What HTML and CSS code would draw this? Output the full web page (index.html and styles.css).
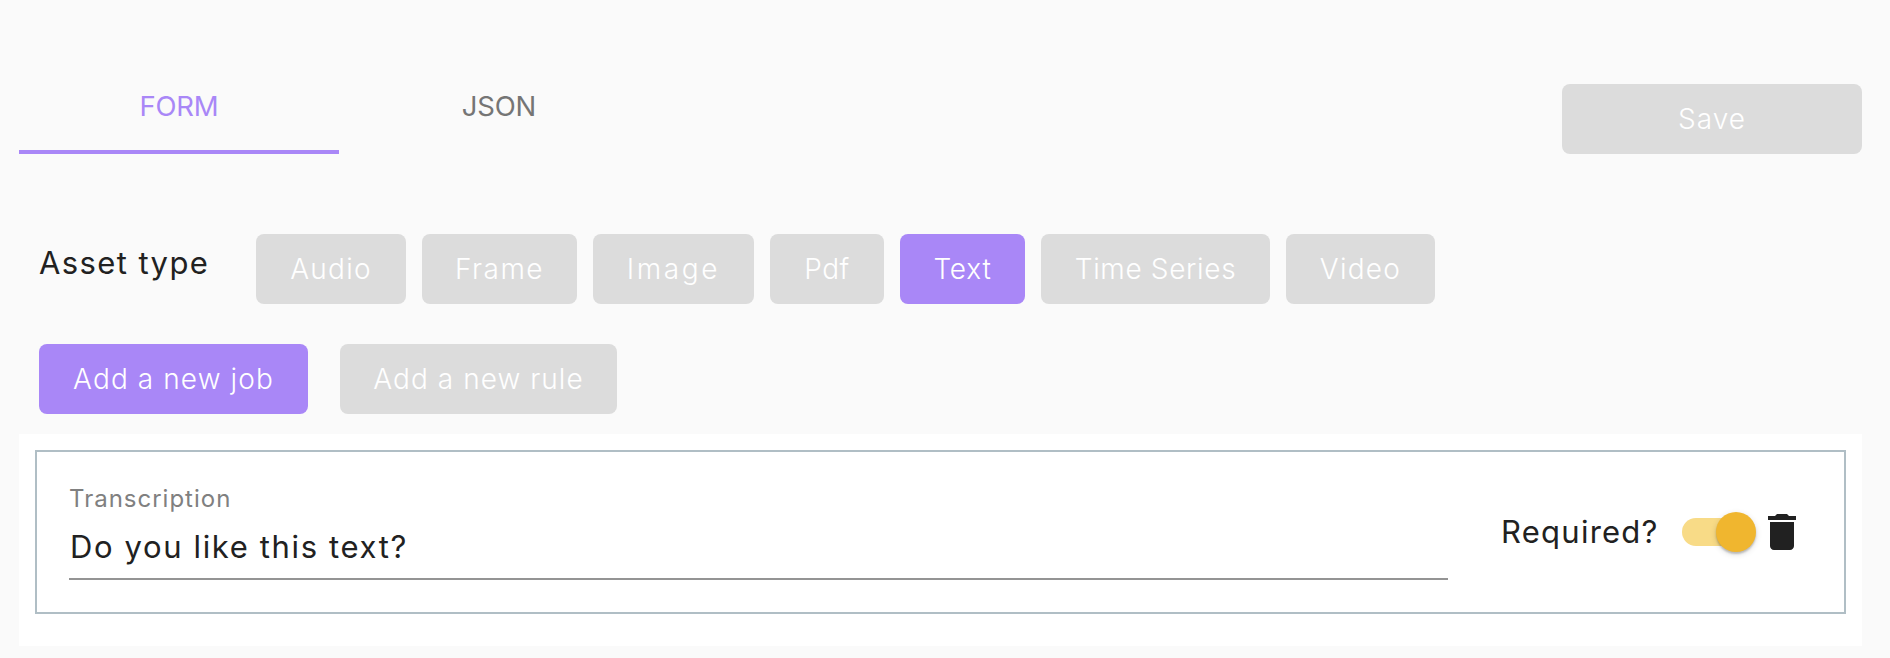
FILE: index.html
```html
<!DOCTYPE html>
<html lang="en">
<head>
<meta charset="utf-8">
<title>Job settings</title>
<link rel="stylesheet" href="styles.css">
</head>
<body>
<main class="page">
  <header class="topbar">
    <nav class="tabs">
      <a class="tab tab-active">FORM</a>
      <a class="tab">JSON</a>
    </nav>
    <button class="btn save">Save</button>
  </header>
  <section class="assets">
    <span class="asset-label">Asset type</span>
    <div class="asset-list">
      <button class="btn w-audio">Audio</button>
      <button class="btn w-frame">Frame</button>
      <button class="btn w-image">Image</button>
      <button class="btn w-pdf">Pdf</button>
      <button class="btn btn-primary w-text">Text</button>
      <button class="btn w-time">Time Series</button>
      <button class="btn w-video">Video</button>
    </div>
  </section>
  <section class="actions">
    <button class="btn btn-primary w-job">Add a new job</button>
    <button class="btn w-rule">Add a new rule</button>
  </section>
  <section class="card">
    <div class="job">
      <div class="field">
        <label class="field-label">Transcription</label>
        <div class="field-value">Do you like this text?</div>
      </div>
      <div class="required">
        <span class="required-label">Required?</span>
        <span class="switch"><span class="thumb"></span></span>
        <svg class="trash" viewBox="0 0 24 24"><path d="M6 19c0 1.1.9 2 2 2h8c1.1 0 2-.9 2-2V7H6v12zM19 4h-3.5l-1-1h-5l-1 1H5v2h14V4z"/></svg>
      </div>
    </div>
  </section>
</main>
</body>
</html>
```
FILE: styles.css
```css
* { box-sizing: border-box; }
body {
  margin: 0;
  background: #fafafa;
  color: #212121;
  font-family: Inter, "Liberation Sans", sans-serif;
  font-weight: 400;
}
.page { height: 658px; padding: 84px 28px 0 19px; overflow: hidden; }
.topbar { display: flex; justify-content: space-between; height: 70px; }
.tabs { display: flex; }
.tab {
  width: 320px;
  height: 70px;
  padding-top: 5px;
  text-align: center;
  font-size: 27.5px;
  line-height: 34px;
  letter-spacing: -.2px;
  color: #757575;
}
.tab-active { color: #a987f7; border-bottom: 4px solid #a987f7; }
.btn {
  height: 70px;
  flex: none;
  padding: 0;
  border: 0;
  border-radius: 8px;
  background: #dcdcdc;
  color: #fff;
  font: inherit;
  font-size: 28px;
  font-weight: 300;
  line-height: 34px;
  letter-spacing: 1.25px;
  white-space: nowrap;
}
.btn-primary { background: #a987f7; }
.save { width: 300px; letter-spacing: 1px; }
.assets { display: flex; margin-top: 80px; padding-left: 20px; }
.asset-label {
  width: 217px;
  padding-top: 10px;
  font-size: 31px;
  line-height: 38px;
  letter-spacing: 1.4px;
  white-space: nowrap;
}
.asset-list { display: flex; gap: 16px; }
.w-audio { width: 150px; }
.w-frame { width: 155px; letter-spacing: 1.5px; }
.w-image { width: 161px; letter-spacing: 2.6px; }
.w-pdf { width: 114px; letter-spacing: .6px; }
.w-text { width: 125px; letter-spacing: .8px; }
.w-time { width: 229px; letter-spacing: .65px; }
.w-video { width: 149px; }
.actions { display: flex; gap: 32px; margin-top: 40px; padding-left: 20px; }
.w-job { width: 269px; letter-spacing: 1.1px; }
.w-rule { width: 277px; letter-spacing: 1.05px; }
.card { height: 212px; margin-top: 20px; padding: 16px; background: #fff; }
.job { display: flex; height: 164px; border: 2px solid #b0bec5; padding-left: 32px; }
.field { width: 1379px; height: 128px; border-bottom: 2px solid #949494; padding-top: 32px; }
.field-label { display: block; font-size: 24px; line-height: 29px; letter-spacing: 1px; color: #808080; }
.field-value { margin-top: 15px; padding-left: 1px; font-size: 31px; line-height: 38px; letter-spacing: 1.63px; }
.required { display: flex; align-items: center; height: 160px; padding-left: 53px; }
.required-label { width: 181px; font-size: 31px; line-height: 38px; letter-spacing: 1.25px; }
.switch {
  display: flex;
  align-items: center;
  justify-content: flex-end;
  width: 68px;
  height: 28px;
  border-radius: 14px;
  background: #f8db87;
}
.thumb {
  flex: none;
  width: 40px;
  height: 40px;
  margin-right: -6px;
  border-radius: 50%;
  background: #f0b62f;
  box-shadow: 0 2px 2px rgba(0, 0, 0, .2), 0 2px 6px rgba(0, 0, 0, .14);
}
.trash { width: 48px; height: 48px; margin-left: 8px; fill: #212121; }
```
